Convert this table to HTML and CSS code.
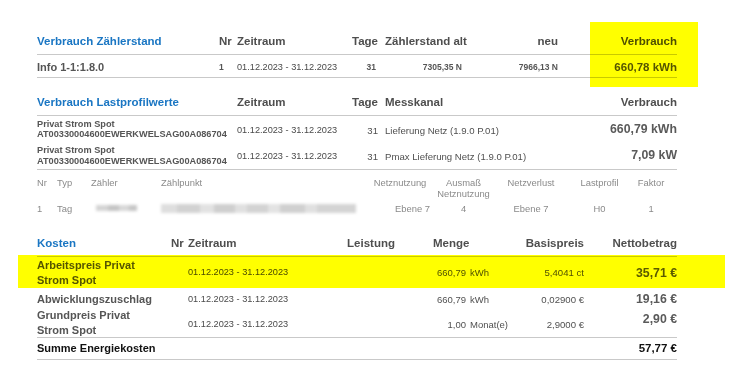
FILE: index.html
```html
<!DOCTYPE html>
<html lang="de">
<head>
<meta charset="utf-8">
<title>Verbrauch und Kosten</title>
<link rel="stylesheet" href="styles.css">
</head>
<body>
<main class="doc">

  <section class="block meter">
    <div class="grid g-meter head">
      <div class="title">Verbrauch Zählerstand</div>
      <div>Nr</div>
      <div>Zeitraum</div>
      <div class="r">Tage</div>
      <div class="pl">Zählerstand alt</div>
      <div class="r">neu</div>
      <div class="r">Verbrauch</div>
    </div>
    <div class="grid g-meter row-meter">
      <div class="lbl">Info 1-1:1.8.0</div>
      <div class="sm">1</div>
      <div class="date">01.12.2023 - 31.12.2023</div>
      <div class="r sm pr2">31</div>
      <div class="r sm pr5">7305,35 N</div>
      <div class="r sm">7966,13 N</div>
      <div class="r big">660,78 kWh</div>
    </div>
    <div class="hl hl-meter"></div>
  </section>

  <section class="block profile">
    <div class="grid g-prof head">
      <div class="title">Verbrauch Lastprofilwerte</div>
      <div>Zeitraum</div>
      <div class="r">Tage</div>
      <div class="pl">Messkanal</div>
      <div class="r">Verbrauch</div>
    </div>
    <div class="grid g-prof row-prof">
      <div class="lbl-s"><div>Privat Strom Spot</div><div>AT00330004600EWERKWELSAG00A086704</div></div>
      <div class="date">01.12.2023 - 31.12.2023</div>
      <div class="r reg">31</div>
      <div class="pl reg">Lieferung Netz (1.9.0 P.01)</div>
      <div class="r big2">660,79 kWh</div>
    </div>
    <div class="grid g-prof row-prof last">
      <div class="lbl-s"><div>Privat Strom Spot</div><div>AT00330004600EWERKWELSAG00A086704</div></div>
      <div class="date">01.12.2023 - 31.12.2023</div>
      <div class="r reg">31</div>
      <div class="pl reg">Pmax Lieferung Netz (1.9.0 P.01)</div>
      <div class="r big2">7,09 kW</div>
    </div>
    <div class="grid g-info info-head">
      <div>Nr</div>
      <div>Typ</div>
      <div>Zähler</div>
      <div>Zählpunkt</div>
      <div class="c">Netznutzung</div>
      <div class="c">Ausmaß<br>Netznutzung</div>
      <div class="c">Netzverlust</div>
      <div class="c">Lastprofil</div>
      <div class="c">Faktor</div>
    </div>
    <div class="grid g-info info-row">
      <div>1</div>
      <div>Tag</div>
      <div><span class="blur blur-a"></span></div>
      <div><span class="blur blur-b"></span></div>
      <div class="r">Ebene 7</div>
      <div class="c">4</div>
      <div class="c">Ebene 7</div>
      <div class="c">H0</div>
      <div class="c">1</div>
    </div>
  </section>

  <section class="block costs">
    <div class="grid g-cost head">
      <div class="title">Kosten</div>
      <div>Nr</div>
      <div>Zeitraum</div>
      <div class="r">Leistung</div>
      <div class="menge-h">Menge</div>
      <div class="r">Basispreis</div>
      <div class="r">Nettobetrag</div>
    </div>
    <div class="grid g-cost crow c1">
      <div class="lbl-c">Arbeitspreis Privat Strom Spot</div>
      <div></div>
      <div class="date">01.12.2023 - 31.12.2023</div>
      <div></div>
      <div class="menge"><span class="num">660,79</span><span>kWh</span></div>
      <div class="r reg">5,4041 ct</div>
      <div class="r big2">35,71 €</div>
    </div>
    <div class="grid g-cost crow c2">
      <div class="lbl-c">Abwicklungszuschlag</div>
      <div></div>
      <div class="date">01.12.2023 - 31.12.2023</div>
      <div></div>
      <div class="menge"><span class="num">660,79</span><span>kWh</span></div>
      <div class="r reg">0,02900 €</div>
      <div class="r big2">19,16 €</div>
    </div>
    <div class="grid g-cost crow c3">
      <div class="lbl-c">Grundpreis Privat Strom Spot</div>
      <div></div>
      <div class="date d3">01.12.2023 - 31.12.2023</div>
      <div></div>
      <div class="menge d3"><span class="num">1,00</span><span>Monat(e)</span></div>
      <div class="r reg d3">2,9000 €</div>
      <div class="r big2 up">2,90 €</div>
    </div>
    <div class="grid g-cost crow sum">
      <div class="lbl-sum">Summe Energiekosten</div>
      <div></div><div></div><div></div><div></div><div></div>
      <div class="r sum-val">57,77 €</div>
    </div>
    <div class="hl hl-cost"></div>
  </section>

</main>
</body>
</html>
```

FILE: styles.css
```css
* { box-sizing: border-box; }

html, body {
  margin: 0;
  padding: 0;
  background: #ffffff;
}

body {
  font-family: "Liberation Sans", Arial, sans-serif;
  color: #555555;
  line-height: 1.2;
}

.doc {
  width: 732px;
  height: 375px;
  padding: 30px 0 0 37px;
  overflow: hidden;
}

.block {
  position: relative;
  width: 640px;
}

.grid {
  display: grid;
  align-items: center;
}

.g-meter { grid-template-columns: 182px 18px 110px 31px 89px 91px 119px; }
.g-prof  { grid-template-columns: 200px 110px 31px 182px 117px; }
.g-info  { grid-template-columns: 20px 34px 70px 209px 60px 67px 68px 69px 34px; }
.g-cost  { grid-template-columns: 134px 17px 142px 65px 125px 64px 93px; }

.r { text-align: right; }
.c { text-align: center; }
.pl { padding-left: 7px; }
.pr2 { padding-right: 2px; }
.pr5 { padding-right: 5px; }

.head {
  height: 25px;
  border-bottom: 1px solid #c9c9c9;
  font-size: 11.5px;
  font-weight: bold;
  color: #4e4e4e;
  white-space: nowrap;
}

.title { color: #1a76c3; }

/* Zählerstand */
.row-meter {
  height: 23px;
  padding-top: 3px;
  border-bottom: 1px solid #c9c9c9;
}
.lbl {
  font-size: 11px;
  font-weight: bold;
  color: #555;
}
.sm {
  font-size: 8.5px;
  font-weight: bold;
  color: #555;
}
.date {
  font-size: 9.2px;
  color: #4a4a4a;
  white-space: nowrap;
}
.big {
  font-size: 11.5px;
  font-weight: bold;
  color: #555;
}

/* Lastprofil */
.profile { margin-top: 13px; }
.row-prof { height: 26px; }
.row-prof.last {
  height: 28px;
  border-bottom: 1px solid #c9c9c9;
}
.lbl-s {
  font-size: 9.2px;
  font-weight: bold;
  line-height: 10.5px;
  color: #555;
  white-space: nowrap;
}
.row-prof .date, .row-prof .reg { padding-top: 3px; }
.reg {
  font-size: 9.6px;
  color: #505050;
  white-space: nowrap;
}
.big2 {
  font-size: 12.3px;
  font-weight: bold;
  color: #5a5a5a;
  white-space: nowrap;
}

.info-head, .info-row {
  font-size: 9.4px;
  line-height: 11px;
  color: #8a8a8a;
  align-items: start;
  white-space: nowrap;
}
.info-head { padding-top: 6.5px; height: 29px; }
.info-row { padding-top: 3.5px; height: 18px; }

.blur {
  display: block;
  filter: blur(1.6px);
}
.blur-a {
  margin: 2px 0 0 5px;
  width: 41px;
  height: 6px;
  background: linear-gradient(90deg, #d4d4d4 0 30%, #c4c4c4 30% 55%, #d8d8d8 55% 80%, #c6c6c6 80%);
}
.blur-b {
  margin: 1px 0 0 0;
  width: 195px;
  height: 9px;
  background:
    linear-gradient(90deg, #dedede 0 8%, #d2d2d2 8% 20%, #e2e2e2 20% 27%, #cfcfcf 27% 38%, #e0e0e0 38% 44%, #d3d3d3 44% 55%, #e3e3e3 55% 61%, #d0d0d0 61% 74%, #e0e0e0 74% 80%, #d4d4d4 80% 100%);
}

/* Kosten */
.costs { margin-top: 15px; }
.menge-h { padding-left: 38px; }
.crow { white-space: nowrap; }
.c1 { height: 32px; }
.c2 { height: 19px; padding-top: 2px; }
.c3 {
  height: 30px;
  border-bottom: 1px solid #c9c9c9;
}
.lbl-c {
  max-width: 120px;
  white-space: normal;
  font-size: 11px;
  font-weight: bold;
  line-height: 15px;
  color: #555;
}
.menge {
  display: flex;
  gap: 4px;
  font-size: 9.5px;
  color: #505050;
}
.menge .num {
  width: 71px;
  text-align: right;
}
.d3 { padding-top: 3px; }
.up { padding-bottom: 8px; }
.sum {
  height: 22px;
  border-bottom: 1px solid #c9c9c9;
}
.lbl-sum {
  font-size: 11px;
  font-weight: bold;
  color: #111;
}
.sum-val {
  font-size: 11.5px;
  font-weight: bold;
  color: #111;
}

/* Markierungen */
.hl {
  position: absolute;
  background: #ffff00;
  mix-blend-mode: multiply;
  pointer-events: none;
}
.hl-meter {
  left: 553px;
  top: -8px;
  width: 108px;
  height: 65px;
}
.hl-cost {
  left: -19px;
  top: 23px;
  width: 707px;
  height: 33px;
}
```
